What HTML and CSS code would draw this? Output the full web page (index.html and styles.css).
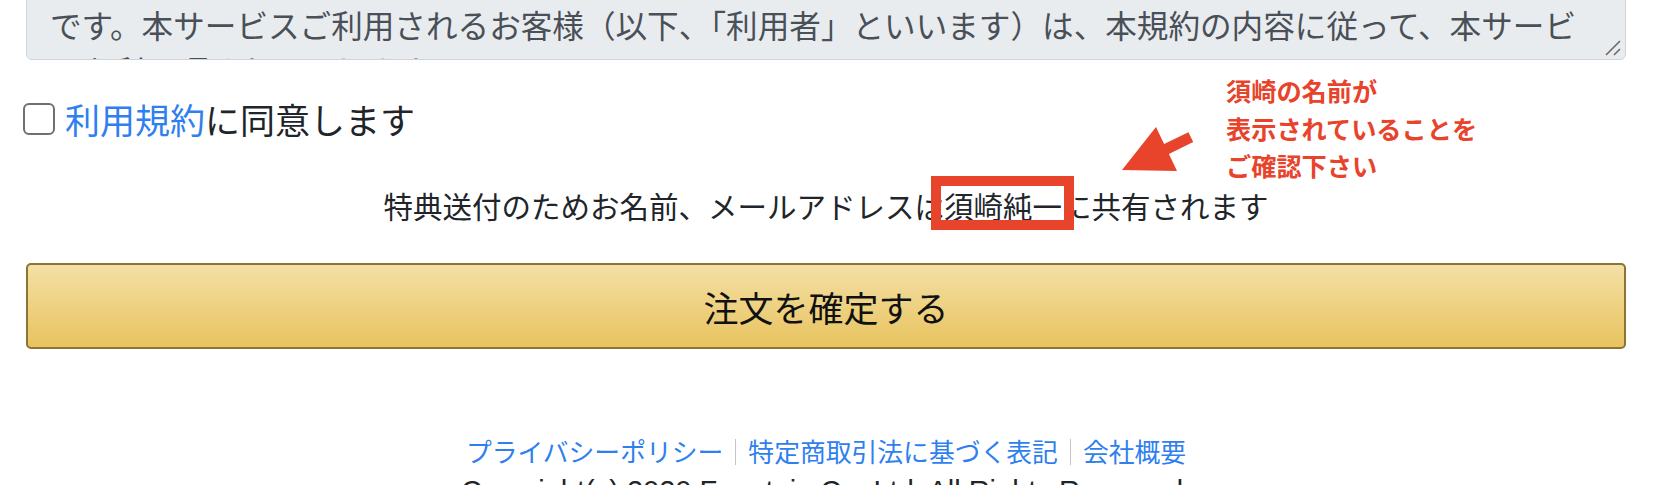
FILE: index.html
```html
<!DOCTYPE html>
<html lang="ja">
<head>
<meta charset="utf-8">
<title>注文確認</title>
<link rel="stylesheet" href="styles.css">
</head>
<body>
<div class="page">
  <div class="terms">
    <div class="terms-line">この利用規約（以下、「本規約」といいます）は、株式会社ファウンテン（以下、「当社」といいます）がこのウェブサイ</div>
    <div class="terms-line">ト上で提供するサービス（以下、「本サービス」といいます）の利用条件を定めるもので、特典の送付に関する規約</div>
    <div class="terms-line">です。本サービスご利用されるお客様（以下、「利用者」といいます）は、本規約の内容に従って、本サービ</div>
    <div class="terms-line">スを利用頂くものとします。</div>
    <svg class="grip" width="18" height="18" viewBox="0 0 18 18"><path d="M2 16 L16 2 M10 16 L16 10" stroke="#6b6b6b" stroke-width="1.6" fill="none"/></svg>
  </div>

  <label class="agree">
    <span class="checkbox"></span>
    <span class="agree-text"><a class="link" href="#">利用規約</a>に同意します</span>
  </label>

  <p class="share">特典送付のためお名前、メールアドレスは須崎純一に共有されます</p>

  <button class="order-btn" type="button">注文を確定する</button>

  <nav class="footer-links">
    <a class="link" href="#">プライバシーポリシー</a><span class="sep"></span><a class="link" href="#">特定商取引法に基づく表記</a><span class="sep"></span><a class="link" href="#">会社概要</a>
  </nav>
  <p class="copyright">Copyright(c) 2020 Fountain Co.,Ltd. All Rights Reserved.</p>

  <div class="note-box"></div>
  <svg class="note-arrow" width="90" height="60" viewBox="1110 120 90 60"><polygon points="1122,170 1156,127 1164.1,144.05 1188.4,132.3 1193.2,142.1 1168.9,153.95 1177,171" fill="#e8432b"/></svg>
  <div class="note-text">須崎の名前が<br>表示されていることを<br>ご確認下さい</div>
</div>
</body>
</html>
```

FILE: styles.css
```css
* { box-sizing: border-box; }
html, body { margin: 0; padding: 0; background: #fff; }
body {
  font-family: "Noto Sans CJK JP", "Noto Sans", sans-serif;
  color: #212529;
  overflow: hidden;
}
.page {
  position: relative;
  width: 1666px;
  height: 485px;
  padding-left: 26px;
  overflow: hidden;
}
.terms {
  position: relative;
  width: 1600px;
  height: 164px;
  margin-top: -104px;
  padding: 12px 23px 0 23px;
  background: #e9ecef;
  border: 1px solid #ced4da;
  border-radius: 6px;
  color: #495057;
  font-size: 31.6px;
  line-height: 46px;
  overflow: hidden;
}
.terms-line { white-space: nowrap; }
.grip { position: absolute; right: 3px; bottom: 2px; }

.agree {
  display: flex;
  align-items: center;
  height: 40px;
  margin-top: 39px;
  font-size: 35px;
  line-height: 40px;
  cursor: pointer;
}
.checkbox {
  width: 32px;
  height: 32px;
  margin-left: -3px;
  border: 2.5px solid #707070;
  border-radius: 6px;
  background: #fff;
  flex: none;
}
.agree-text { margin-left: 10px; }
.link { color: #2f7fef; text-decoration: none; }

.share {
  width: 1600px;
  margin: 46px 0 0 0;
  font-size: 29.5px;
  line-height: 40px;
  text-align: center;
}
.order-btn {
  display: block;
  width: 1600px;
  height: 86px;
  margin-top: 38px;
  padding: 0;
  border: 2px solid #8c7434;
  border-radius: 5px;
  background: linear-gradient(to bottom, #f4e0a6 0%, #e8c35e 100%);
  font-family: "Noto Sans CJK JP", sans-serif;
  font-size: 35px;
  color: #111;
  cursor: pointer;
}
.footer-links {
  display: flex;
  justify-content: center;
  align-items: center;
  width: 1600px;
  height: 40px;
  margin-top: 82px;
  font-size: 25.8px;
  line-height: 40px;
}
.sep {
  display: block;
  width: 1px;
  height: 26px;
  margin: 2px 12px 0;
  background: #c4c4c4;
}
.copyright {
  width: 1600px;
  margin: 0;
  font-family: "Liberation Sans", "Noto Sans CJK JP", sans-serif;
  font-size: 29px;
  line-height: 40px;
  text-align: center;
  color: #212529;
}

.note-box {
  position: absolute;
  left: 931px;
  top: 176px;
  width: 143px;
  height: 54px;
  border: 10px solid #e8432b;
}
.note-arrow { position: absolute; left: 1110px; top: 120px; }
.note-text {
  position: absolute;
  left: 1226px;
  top: 72px;
  font-size: 25.2px;
  font-weight: 700;
  line-height: 37.5px;
  color: #e8432b;
  white-space: nowrap;
}
```
